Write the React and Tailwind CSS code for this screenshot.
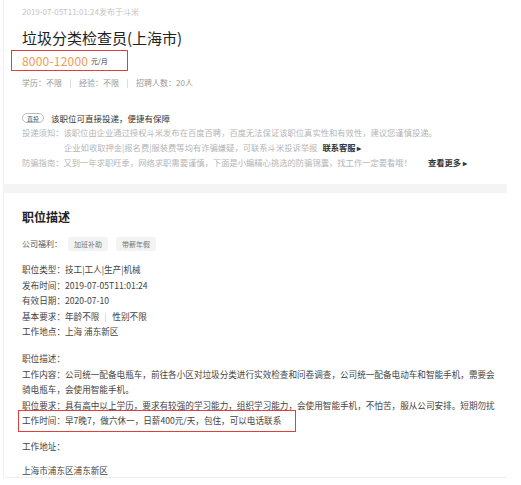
import React from "react";

const font = { fontFamily: '"Noto Sans CJK SC", "Noto Sans", sans-serif' };

function Bar({ className = "mx-2" }) {
  return <span className={`inline-block w-px h-[9px] bg-[#ddd] align-middle ${className}`} />;
}

export default function App() {
  const details = [
    "职位类型：技工|工人|生产|机械",
    "发布时间：2019-07-05T11:01:24",
    "有效日期：2020-07-10",
  ];

  return (
    <div className="w-[521px] h-[485px] bg-white pl-[3px] pr-[14px] overflow-hidden" style={font}>
      {/* Top card */}
      <div className="border-l border-[#eee] pl-[18px] pt-[5px] pb-[14px]">
        <p className="text-[8px] leading-[14px] text-[#c4c4c4]">2019-07-05T11:01:24发布于斗米</p>

        <h1 className="mt-[9px] text-[15px] leading-[20px] text-[#222]">垃圾分类检查员(上海市)</h1>

        <div className="relative mt-[2px] h-[21px] flex items-center">
          <span className="text-[12px] text-[#f29b50] tracking-[0.2px]">8000-12000</span>
          <span className="ml-[3px] text-[7px] text-[#444] mt-[2px]">元/月</span>
          <div className="absolute left-[-11px] top-0 w-[117px] h-[21px] border-[1.5px] border-[#e0403a]" />
        </div>

        <p className="mt-[5px] text-[8px] leading-[14px] text-[#999]">
          学历：不限<Bar />经验：不限<Bar />招聘人数：20人
        </p>

        <div className="mt-[21px] h-[14px] flex items-center gap-[7px]">
          <span className="h-[10px] px-[4px] flex items-center rounded-full border border-[#bbb] text-[6px] text-[#555]">直投</span>
          <span className="text-[8.5px] text-[#333]">该职位可直接投递，便捷有保障</span>
        </div>

        <div className="text-[8.3px] leading-[15px] text-[#b5b5b5]">
          <p>投递须知：该职位由企业通过授权斗米发布在百度百聘，百度无法保证该职位真实性和有效性，建议您谨慎投递。</p>
          <p className="pl-[42px]">
            企业如收取押金|报名费|服装费等均有诈骗嫌疑，可联系斗米投诉举报
            <span className="ml-[5px] font-bold text-[#333]">联系客服 ▸</span>
          </p>
          <p>
            防骗指南：又到一年求职旺季，网络求职需要谨慎，下面是小编精心挑选的防骗锦囊，找工作一定要看哦！
            <span className="ml-[16px] font-bold text-[#333]">查看更多 ▸</span>
          </p>
        </div>
      </div>

      <div className="h-[9px] bg-[#f4f4f4]" />

      {/* Description card */}
      <div className="border-l border-b border-[#eee] pl-[18px] pr-[5px] pt-[15px]">
        <h2 className="text-[12px] leading-[18px] font-bold text-[#222]">职位描述</h2>

        <div className="mt-[11px] h-[14px] flex items-center text-[8px] text-[#555]">
          <span>公司福利：</span>
          <span className="ml-[6px] h-[14px] px-[6px] flex items-center rounded-[3px] bg-[#f3f3f3] text-[7px] text-[#777]">加班补助</span>
          <span className="ml-[8px] h-[14px] px-[6px] flex items-center rounded-[3px] bg-[#f3f3f3] text-[7px] text-[#777]">带薪年假</span>
        </div>

        <div className="mt-[11px] text-[8.6px] leading-[15.5px] text-[#444]">
          {details.map((d) => (
            <p key={d}>{d}</p>
          ))}
          <p>
            基本要求：年龄不限<Bar className="mx-[6px]" />性别不限
          </p>
          <p>工作地点：上海 浦东新区</p>

          <p className="mt-[11.5px]">职位描述：</p>
          <p>
            工作内容：公司统一配备电瓶车，前往各小区对垃圾分类进行实效检查和问卷调查，公司统一配备电动车和智能手机，需要会骑电瓶车，会使用智能手机。
          </p>
          <p className="whitespace-nowrap">
            职位要求：具有高中以上学历，要求有较强的学习能力，组织学习能力，会使用智能手机，不怕苦，服从公司安排。短期勿扰
          </p>
          <p className="relative">
            工作时间：早7晚7，做六休一，日薪400元/天，包住，可以电话联系
            <span className="absolute left-[-4px] top-[-3px] w-[278px] h-[22px] border-[1.5px] border-[#e0403a]" />
          </p>

          <p className="mt-[10.5px]">工作地址：</p>
          <p className="mt-[8.5px] leading-[14px]">上海市浦东区浦东新区</p>
        </div>
      </div>
    </div>
  );
}
